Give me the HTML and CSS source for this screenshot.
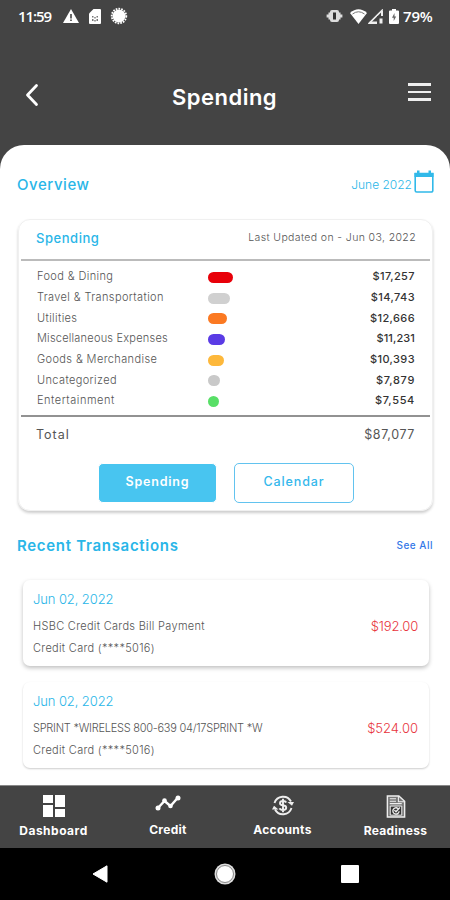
FILE: index.html
```html
<!DOCTYPE html>
<html lang="en">
<head>
    <meta charset="UTF-8">
    <meta name="viewport" content="width=device-width, initial-scale=1.0">
    <title>Spending</title>
    <link rel="stylesheet" href="styles.css">
</head>
<body>

<div class="status-bar">
    <span class="clock">11:59</span>
    <svg class="icon-warning" width="16" height="14" viewBox="0 0 16 14"><path d="M8 0L16 14H0Z" fill="#fff"/><path d="M7.2 5h1.6v4.5H7.2zM7.2 10.5h1.6v1.5H7.2z" fill="#444"/></svg>
    <svg class="icon-sim" width="12" height="15" viewBox="0 0 12 15"><path d="M4.5 0H11a1 1 0 0 1 1 1v13a1 1 0 0 1-1 1H1a1 1 0 0 1-1-1V4.5z" fill="#fff"/><path d="M3 7h1.5v1.5H3zM5.3 8h1.4v1.5H5.3zM7.5 7H9v1.5H7.5zM3 10h1.5v2H3zM5.3 11h1.4v1.5H5.3zM7.5 10H9v2H7.5z" fill="#777"/></svg>
    <svg class="icon-badge" width="18" height="18" viewBox="0 0 18 18"><circle cx="9" cy="9" r="6.5" fill="#fff"/><circle cx="9" cy="9" r="7.3" fill="none" stroke="#fff" stroke-width="1.8" stroke-dasharray="1.7 1.1"/></svg>
    <div class="status-right">
        <svg width="17" height="14" viewBox="0 0 17 14"><rect x="4" y="1" width="9" height="12" rx="2" fill="#ddd"/><rect x="7" y="3.500" width="3" height="7" fill="#333"/><path d="M2.500 3.500h2v7h-2zM12.500 3.500h2v7h-2zM.6 5.500h2v3h-2zM14.400 5.500h2v3h-2z" fill="#ddd"/></svg>
        <svg class="icon-wifi" width="17" height="15" viewBox="0 0 17 15"><path d="M0 4Q8.500-3.500 17 4L8.500 15Z" fill="#fff"/><path d="M2.500 5Q8.500 .5 14.500 5" stroke="#777" fill="none"/></svg>
        <svg class="icon-signal" width="15" height="15" viewBox="0 0 15 15"><path d="M14 1.500V14H1.500Z" fill="none" stroke="#eee" stroke-width="1.700"/><path d="M9 7h6v8H9z" fill="#444"/><path d="M11.500 9.500h3v5h-3zM2 12.500h7V15H0zM13 2h2v5h-2z" fill="#eee"/></svg>
        <svg class="icon-battery" width="10" height="15" viewBox="0 0 10 15"><path d="M3 0h4v1.500h2a1 1 0 0 1 1 1V14a1 1 0 0 1-1 1H1a1 1 0 0 1-1-1V2.500a1 1 0 0 1 1-1h2z" fill="#fff"/><path d="M5.500 4L3 8.700h1.700V12L7.200 7.500H5.500z" fill="#666"/></svg>
        <span class="battery-text">79%</span>
    </div>
</div>

<div class="header">
    <svg class="back" width="14" height="24" viewBox="0 0 14 24"><path d="M11.500 2.500L2.500 12L11.500 21.500" fill="none" stroke="#fff" stroke-width="2.800" stroke-linecap="round" stroke-linejoin="round"/></svg>
    <h1 class="title">Spending</h1>
    <div class="menu"><span></span><span></span><span></span></div>
</div>

<div class="content">
    <div class="overview">
        <h2 class="overview-title">Overview</h2>
        <span class="month">June 2022</span>
        <svg class="calendar" width="20" height="23" viewBox="0 0 20 23"><path d="M1.200 3.500h17.600V20.500a1.500 1.500 0 0 1-1.500 1.500H2.700a1.500 1.500 0 0 1-1.500-1.500z" fill="none" stroke="#31b9e9" stroke-width="1.600"/><path d="M.5 3h19v4H.5zM3 .5h2.500V4H3zM14.500 .5H17V4h-2.500z" fill="#31b9e9"/></svg>
    </div>

    <div class="card">
        <div class="card-head">
            <h3 class="card-title">Spending</h3>
            <span class="updated">Last Updated on - Jun 03, 2022</span>
        </div>
        <div class="rows">
            <div class="row"><span class="name">Food &amp; Dining</span><i class="bar red"></i><span class="amount">$17,257</span></div>
            <div class="row"><span class="name">Travel &amp; Transportation</span><i class="bar silver"></i><span class="amount">$14,743</span></div>
            <div class="row"><span class="name">Utilities</span><i class="bar orange"></i><span class="amount">$12,666</span></div>
            <div class="row"><span class="name tight">Miscellaneous Expenses</span><i class="bar purple"></i><span class="amount narrow">$11,231</span></div>
            <div class="row"><span class="name">Goods &amp; Merchandise</span><i class="bar yellow"></i><span class="amount">$10,393</span></div>
            <div class="row"><span class="name">Uncategorized</span><i class="bar grey"></i><span class="amount wide">$7,879</span></div>
            <div class="row"><span class="name loose">Entertainment</span><i class="bar green"></i><span class="amount wide">$7,554</span></div>
        </div>
        <div class="total">
            <span class="total-label">Total</span>
            <span class="total-amount">$87,077</span>
        </div>
        <div class="buttons">
            <button class="btn btn-fill">Spending</button>
            <button class="btn btn-line">Calendar</button>
        </div>
    </div>

    <div class="recent">
        <h2 class="recent-title">Recent Transactions</h2>
        <a class="see-all">See All</a>
    </div>

    <div class="transaction">
        <div>
            <p class="date">Jun 02, 2022</p>
            <p class="desc">HSBC Credit Cards Bill Payment</p>
            <p class="desc">Credit Card (****5016)</p>
        </div>
        <span class="price price-narrow">$192.00</span>
    </div>
    <div class="transaction last">
        <div>
            <p class="date">Jun 02, 2022</p>
            <p class="desc sprint">SPRINT *WIRELESS 800-639 04/17SPRINT *W</p>
            <p class="desc">Credit Card (****5016)</p>
        </div>
        <span class="price">$524.00</span>
    </div>
</div>

<div class="tabs">
    <div class="tab dashboard">
        <svg width="22" height="22" viewBox="0 0 22 22"><path d="M0 0h10v8H0zM12 0h10v12H12zM0 10h10v12H0zM12 14h10v8H12z" fill="#fff"/></svg>
        <span>Dashboard</span>
    </div>
    <div class="tab credit">
        <svg width="26" height="22" viewBox="0 0 26 22"><path d="M3 13L9.500 6L15.500 11L23 2.500" fill="none" stroke="#fff" stroke-width="2.400"/><g fill="#fff"><circle cx="3" cy="13" r="2.500"/><circle cx="9.500" cy="5.500" r="2.300"/><circle cx="15.500" cy="11" r="2.300"/><circle cx="23" cy="3" r="2.500"/></g></svg>
        <span>Credit</span>
    </div>
    <div class="tab accounts">
        <svg width="24" height="22" viewBox="0 0 24 22"><g fill="none" stroke="#eee" stroke-width="1.900"><path d="M3.500 8A9 9 0 0 1 20 6.500M20.500 13A9 9 0 0 1 4 14.500"/><path d="M15.200 7.500Q14.500 6 12 6Q9 6 9 8.200Q9 10 12 10.300Q15.200 10.700 15.200 12.800Q15.200 15 12 15Q9.200 15 8.600 13.200M12 3.800V17.200"/></g><path d="M16.500 7.100h6.500L21 10.800zM7.500 14.500H1L3 10.800z" fill="#eee"/></svg>
        <span>Accounts</span>
    </div>
    <div class="tab readiness">
        <svg width="20" height="23" viewBox="0 0 20 24"><path d="M1 1H13L19 6.500V23H1Z" fill="#777"/><path d="M4 12H16V21H4Z" fill="#333"/><g fill="none" stroke="#eee"><path d="M1 1H13L19 6.500V23H1Z" stroke-width="1.500"/><path d="M12.500 1V7H19M3.500 4H10M3.500 6.500H10M3.500 9H16" stroke-width="1.100"/><path d="M4 11.500H16V21H4Z" stroke-width="1"/><path d="M12 14A3.300 3.300 0 1 0 13.300 17M8.300 15.800L10 17.500L14 13" stroke-width="1.400"/></g></svg>
        <span>Readiness</span>
    </div>
</div>

<div class="system-nav">
    <svg width="16" height="18" viewBox="0 0 16 18"><path d="M15 .8V17.200L1 9Z" fill="#fff" stroke="#fff" stroke-linejoin="round"/></svg>
    <svg width="22" height="22" viewBox="0 0 22 22"><circle cx="11" cy="11" r="10.500" fill="#ddd"/><circle cx="11" cy="11" r="8.500" fill="#fff" stroke="#888" stroke-width="1"/></svg>
    <svg width="18" height="18" viewBox="0 0 18 18"><rect width="18" height="18" rx="1" fill="#fff"/></svg>
</div>

</body>
</html>
```
FILE: styles.css
```css
* {
    box-sizing: border-box;
}

body {
    margin: 0;
    width: 450px;
    height: 900px;
    display: flex;
    flex-direction: column;
    overflow: hidden;
    font-family: Inter, sans-serif;
    color: #555;
    background-color: #444;
    white-space: nowrap;
}

h1, h2, h3, p {
    margin: 0;
}

svg {
    display: block;
    flex: none;
}

.status-bar {
    display: flex;
    align-items: center;
    height: 32px;
    padding-left: 18px;
    padding-right: 17px;
    color: white;
}

.clock {
    width: 45px;
    font-family: "Open Sans", sans-serif;
    font-size: 15px;
    font-weight: 600;
    letter-spacing: -1.1px;
}

.icon-sim {
    margin-left: 10px;
}

.icon-badge {
    margin-left: 9px;
}

.status-right {
    display: flex;
    align-items: center;
    margin-left: auto;
}

.icon-wifi {
    margin-left: 7px;
}

.icon-signal {
    margin-left: 1px;
}

.icon-battery {
    margin-left: 6px;
}

.battery-text {
    width: 30px;
    margin-left: 4px;
    font-family: "Open Sans", sans-serif;
    font-size: 15px;
    font-weight: 600;
    letter-spacing: -0.2px;
}

.header {
    display: flex;
    justify-content: space-between;
    height: 113px;
    padding: 0 19px 0 25px;
}

.back {
    margin-top: 51px;
}

.title {
    margin: 50px 0 0 2px;
    font-size: 22px;
    font-weight: 600;
    line-height: 30px;
    letter-spacing: 0.5px;
    color: white;
}

.menu {
    display: flex;
    flex-direction: column;
    gap: 5px;
    width: 23px;
    margin-top: 51px;
}

.menu span {
    height: 2.5px;
    background-color: #eee;
}

.content {
    height: 640px;
    padding: 25px 17px 0;
    border-radius: 24px 24px 0 0;
    background-color: white;
}

.overview {
    display: flex;
    align-items: center;
    height: 28px;
}

.overview-title {
    margin-right: auto;
    font-size: 15px;
    font-weight: 500;
    letter-spacing: 0.55px;
    color: #29b6e8;
}

.month {
    margin-right: 2px;
    font-size: 12px;
    font-weight: 300;
    color: #29b6e8;
}

.calendar {
    margin: -5px -1px 0 0;
}

.card {
    height: 292px;
    margin: 21px 0 0 1px;
    padding: 0 2px;
    border: 1px solid #f0f0f0;
    border-radius: 12px;
    box-shadow: 0 2px 3px rgba(0, 0, 0, 0.2);
}

.card-head {
    display: flex;
    justify-content: space-between;
    align-items: center;
    height: 41px;
    padding: 0 14px 4px 15px;
    border-bottom: 2px solid #bbb;
}

.card-title {
    font-size: 13px;
    font-weight: 500;
    letter-spacing: 0.55px;
    color: #29b6e8;
}

.updated {
    font-size: 10.5px;
    font-weight: 300;
    letter-spacing: 0.38px;
}

.rows {
    height: 156px;
    padding: 6px 15px 0 16px;
    border-bottom: 2px solid #929292;
}

.row {
    display: grid;
    grid-template-columns: 171px 40px 1fr;
    align-items: center;
    height: 20.7px;
}

.name {
    margin-bottom: 2px;
    font-size: 11px;
    font-weight: 300;
    letter-spacing: 0.38px;
}

.tight {
    letter-spacing: 0.22px;
}

.loose {
    letter-spacing: 0.53px;
}

.amount {
    margin-bottom: 2px;
    font-size: 11px;
    font-weight: 500;
    letter-spacing: 0.4px;
    text-align: right;
    color: #333;
}

.narrow {
    letter-spacing: 0.1px;
}

.wide {
    letter-spacing: 0.65px;
}

.bar {
    height: 11px;
    border-radius: 6px;
}

.red { width: 25px; background-color: #e80009; }
.silver { width: 22px; background-color: #d0d0d0; }
.orange { width: 19px; background-color: #fb7922; }
.purple { width: 17px; background-color: #5a3be5; }
.yellow { width: 16px; background-color: #fdb83b; }
.grey { width: 12px; background-color: #c9c9c9; }
.green { width: 11px; background-color: #58df67; }

.total {
    display: flex;
    justify-content: space-between;
    align-items: center;
    height: 35px;
    padding: 0 15px;
    font-size: 12.5px;
    letter-spacing: 0.6px;
}

.total-label {
    letter-spacing: 1px;
}

.buttons {
    display: flex;
    gap: 17px;
    padding: 11px 0 0 77px;
}

.btn {
    width: 119px;
    height: 40px;
    padding: 0 0 3px;
    border: 1px solid #62c3ef;
    border-radius: 5px;
    background-color: white;
    font-family: Inter, sans-serif;
    font-size: 12.5px;
    font-weight: 500;
    letter-spacing: 0.9px;
    color: #35b8ec;
}

.btn-fill {
    border-color: #fff;
    background-color: #48c5f0;
    font-weight: 600;
    letter-spacing: 0.8px;
    color: white;
}

.btn-line {
    width: 120px;
}

.recent {
    display: flex;
    justify-content: space-between;
    align-items: center;
    height: 24px;
    margin-top: 22px;
}

.recent-title {
    font-size: 15px;
    font-weight: 600;
    letter-spacing: 0.7px;
    color: #29b6e8;
}

.see-all {
    font-size: 10px;
    font-weight: 500;
    letter-spacing: 0.5px;
    color: #3478e8;
}

.transaction {
    display: flex;
    justify-content: space-between;
    height: 86px;
    margin: 23px 4px 0 6px;
    padding: 8px 11px 0 10px;
    border-radius: 7px;
    box-shadow: 0 2px 4px rgba(0, 0, 0, 0.25);
}

.last {
    margin-top: 16px;
    box-shadow: 0 1px 2px rgba(0, 0, 0, 0.2);
}

.date {
    height: 24px;
    font-size: 13px;
    font-weight: 300;
    line-height: 22px;
    letter-spacing: -0.1px;
    color: #29b6e8;
}

.desc {
    height: 22px;
    font-size: 11px;
    font-weight: 300;
    line-height: 28px;
    letter-spacing: 0.3px;
}

.sprint {
    letter-spacing: -0.25px;
}

.price {
    margin-top: 28px;
    font-size: 13px;
    font-weight: 300;
    line-height: 20px;
    color: #e8343c;
}

.price-narrow {
    letter-spacing: -0.2px;
}

.tabs {
    display: grid;
    grid-template-columns: 107px 122px 107px 114px;
    height: 63px;
    border-top: 1px solid #888;
    background-color: #444;
}

.tab {
    display: flex;
    flex-direction: column;
    align-items: center;
    padding-top: 9px;
    color: white;
    font-size: 12px;
    font-weight: 700;
    line-height: 16px;
    letter-spacing: 0.3px;
}

.tab span {
    margin-top: 5px;
}

.dashboard {
    letter-spacing: 0.5px;
}

.dashboard span {
    margin-top: 6px;
}

.readiness {
    padding-left: 5px;
}

.system-nav {
    display: flex;
    justify-content: space-between;
    align-items: center;
    height: 52px;
    padding: 0 91px 0 92px;
    background-color: black;
}
```
